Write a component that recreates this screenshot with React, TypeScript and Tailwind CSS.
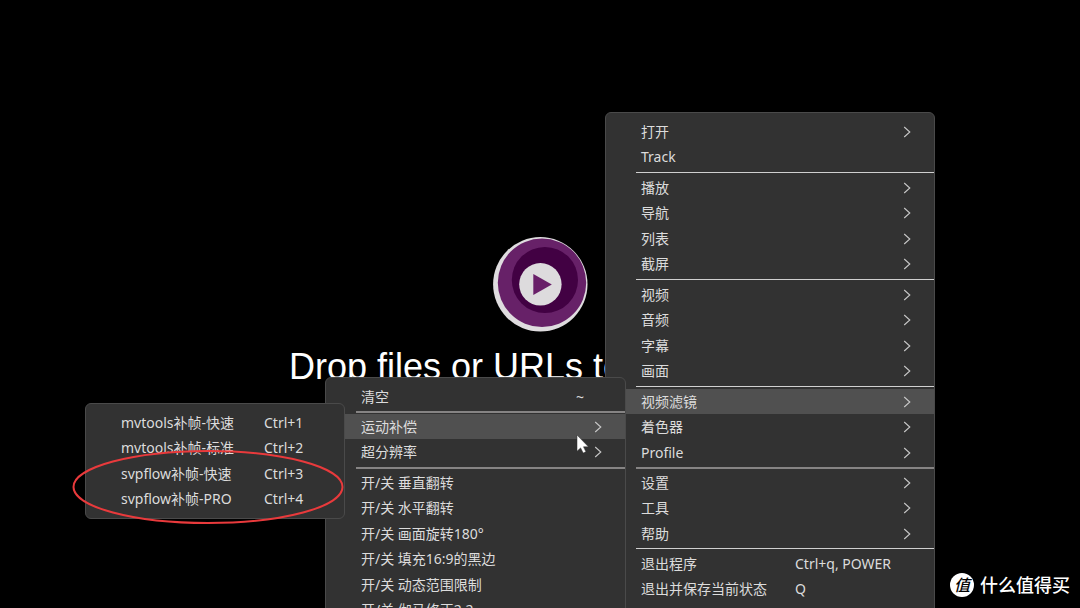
import clsx from "clsx";

type Item = {
  label: string;
  shortcut?: string;
  submenu?: boolean;
  active?: boolean;
};

type Group = {
  items: Item[];
  rule?: "thin" | "thick";
};

type MenuProps = {
  label: string;
  groups: Group[];
  className: string;
  shortcutClassName: string;
};

const mainMenu: Group[] = [
  { items: [{ label: "打开", submenu: true }, { label: "Track" }], rule: "thin" },
  {
    items: [
      { label: "播放", submenu: true },
      { label: "导航", submenu: true },
      { label: "列表", submenu: true },
      { label: "截屏", submenu: true },
    ],
    rule: "thin",
  },
  {
    items: [
      { label: "视频", submenu: true },
      { label: "音频", submenu: true },
      { label: "字幕", submenu: true },
      { label: "画面", submenu: true },
    ],
    rule: "thin",
  },
  {
    items: [
      { label: "视频滤镜", submenu: true, active: true },
      { label: "着色器", submenu: true },
      { label: "Profile", submenu: true },
    ],
    rule: "thick",
  },
  {
    items: [
      { label: "设置", submenu: true },
      { label: "工具", submenu: true },
      { label: "帮助", submenu: true },
    ],
    rule: "thin",
  },
  {
    items: [
      { label: "退出程序", shortcut: "Ctrl+q, POWER" },
      { label: "退出并保存当前状态", shortcut: "Q" },
    ],
  },
];

const filterMenu: Group[] = [
  { items: [{ label: "清空", shortcut: "~" }], rule: "thick" },
  {
    items: [
      { label: "运动补偿", submenu: true, active: true },
      { label: "超分辨率", submenu: true },
    ],
    rule: "thick",
  },
  {
    items: [
      { label: "开/关 垂直翻转" },
      { label: "开/关 水平翻转" },
      { label: "开/关 画面旋转180°" },
      { label: "开/关 填充16:9的黑边" },
      { label: "开/关 动态范围限制" },
      { label: "开/关 伽马修正2.2" },
    ],
  },
];

const motionMenu: Group[] = [
  {
    items: [
      { label: "mvtools补帧-快速", shortcut: "Ctrl+1" },
      { label: "mvtools补帧-标准", shortcut: "Ctrl+2" },
      { label: "svpflow补帧-快速", shortcut: "Ctrl+3" },
      { label: "svpflow补帧-PRO", shortcut: "Ctrl+4" },
    ],
  },
];

function Menu({ label, groups, className, shortcutClassName }: MenuProps) {
  return (
    <div
      role="menu"
      aria-label={label}
      className={clsx("absolute rounded-md border border-[#4a4a4a] bg-[#323232] pt-1.5 text-sm text-[#dcdcdc]", className)}
    >
      {groups.map((group) => (
        <div key={group.items[0].label}>
          <div role="group">
            {group.items.map((item) => (
              <button
                key={item.label}
                type="button"
                role="menuitem"
                className={clsx(
                  "flex h-[25px] w-full items-center pr-6 pl-[35px] text-left whitespace-pre even:h-[26px]",
                  item.active ? "bg-[#505050]" : "hover:bg-[#505050]",
                )}
              >
                <span className="flex-1">{item.label}</span>
                {item.shortcut && <span className={shortcutClassName}>{item.shortcut}</span>}
                {item.submenu && <Chevron />}
              </button>
            ))}
          </div>
          {group.rule && (
            <div
              role="separator"
              className={clsx("mt-0.5 ml-[30px]", group.rule === "thin" ? "mb-0.5 h-px bg-[#d0d0d0]" : "mb-px h-0.5 bg-[#868484]")}
            />
          )}
        </div>
      ))}
    </div>
  );
}

function Chevron() {
  return (
    <svg viewBox="0 0 6 10" className="h-2.5 w-1.5 overflow-visible" fill="none" stroke="#c8c8c8" strokeWidth="1.1">
      <path d="M0.2 0 5.8 5 0.2 10" />
    </svg>
  );
}

function Logo() {
  return (
    <svg viewBox="0 0 96 96" className="size-24">
      <circle cx="48.3" cy="48.3" r="47.2" fill="#dfdcdf" />
      <circle cx="50" cy="46.8" r="44.2" fill="#672168" />
      <circle cx="52.9" cy="44" r="33.1" fill="#420143" />
      <circle cx="48.4" cy="48.3" r="21.2" fill="#dddbdd" />
      <path d="M41.3 37.9v21.2L59.8 48.4z" fill="#691f69" />
    </svg>
  );
}

function Pointer() {
  return (
    <svg viewBox="0 0 14 20" className="absolute top-[434px] left-[576px] h-5 w-3.5">
      <path
        d="M1 1v16.2l3.6-3.3 2.6 5.2 2.7-1.3-2.4-5h4.9z"
        fill="#fff"
        stroke="#303030"
        strokeWidth="0.5"
        strokeLinejoin="round"
      />
    </svg>
  );
}

export default function App() {
  return (
    <main className="relative h-screen overflow-hidden bg-black font-['Noto_Sans','Noto_Sans_CJK_SC',sans-serif]">
      <div className="flex flex-col items-center pt-[236px]">
        <Logo />
        <p className="mt-[15px] font-['Liberation_Sans',sans-serif] text-4xl whitespace-nowrap text-white">
          Drop files or URLs to play here.
        </p>
      </div>

      <Menu label="主菜单" groups={mainMenu} className="top-28 left-[605px] w-[330px] pb-4" shortcutClassName="w-[115px]" />
      <Menu
        label="视频滤镜"
        groups={filterMenu}
        className="top-[377px] left-[325px] w-[301px] pb-1.5"
        shortcutClassName="w-[25px]"
      />
      <Menu
        label="运动补偿"
        groups={motionMenu}
        className="top-[403px] left-[85px] w-[260px] pb-1.5"
        shortcutClassName="w-[56px]"
      />

      <svg viewBox="0 0 274 76" className="absolute top-[449px] left-[71px] h-[76px] w-[274px]" fill="none">
        <ellipse cx="137" cy="38" rx="134.5" ry="36" stroke="#e93a3c" strokeWidth="2" />
      </svg>
      <Pointer />

      <div className="absolute right-2.5 bottom-[9px] flex items-center gap-1.5 text-white">
        <span className="flex size-6 items-center justify-center rounded-full bg-white text-base leading-none font-medium text-black italic">
          值
        </span>
        <span className="text-lg font-medium">什么值得买</span>
      </div>
    </main>
  );
}
